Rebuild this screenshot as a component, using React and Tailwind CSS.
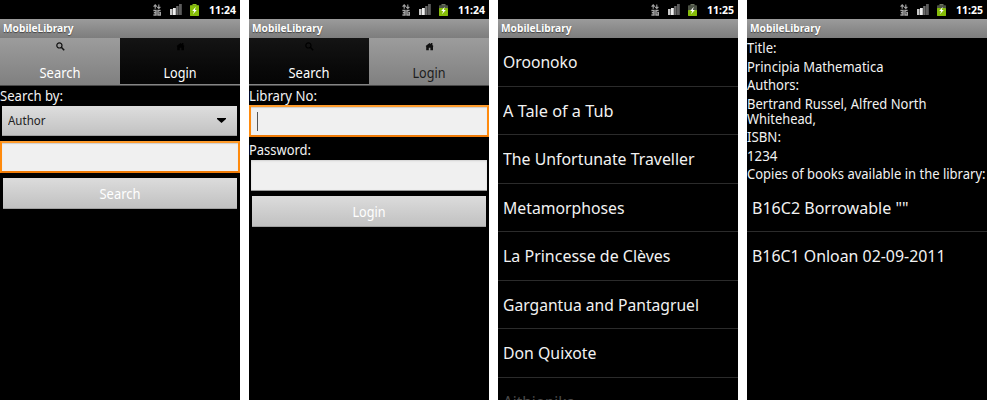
import { useLayoutEffect, useRef } from "react";

// Condenses a line of text horizontally so that it spans the given width.
function Fit({ w, className = "", children }) {
  const ref = useRef(null);
  useLayoutEffect(() => {
    const el = ref.current;
    el.style.transform = "none";
    const natural = el.getBoundingClientRect().width;
    el.style.transform = `scaleX(${w / natural})`;
  }, [w, children]);
  return (
    <span className={`block shrink-0 ${className}`} style={{ width: w }}>
      <span ref={ref} className="inline-block origin-left align-top whitespace-nowrap">
        {children}
      </span>
    </span>
  );
}

function NetworkIcon() {
  return (
    <svg width="8" height="12" viewBox="0 0 8 12" fill="none" stroke="#a4a4a4">
      <path d="M2.2 4.8V1M.6 2.6 2.2.8l1.6 1.8" strokeWidth="1.1" />
      <path d="M5.8.5v3.8M4.2 2.8l1.6 1.7 1.6-1.7" strokeWidth="1.1" />
      <path d="M.4 6.5H3v4.4H.4M.8 8.7h2.2M7.6 6.5H5v4.4h2.4V8.8H6.2" strokeWidth="1.5" />
    </svg>
  );
}

function SignalIcon() {
  return (
    <svg width="12" height="11" viewBox="0 0 12 11">
      <rect x="0" y="5" width="2.6" height="6" fill="#c8c8c8" />
      <rect x="3" y="4" width="2.8" height="7" fill="#eeeeee" />
      <rect x="6.2" y="2" width="2.4" height="9" fill="#6c6c6c" />
      <rect x="9" y="0" width="2.8" height="11" fill="#5c5c5c" />
    </svg>
  );
}

function BatteryIcon({ level }) {
  const top = level === "full" ? 1.2 : level === "high" ? 4 : 6;
  return (
    <svg width="9" height="12" viewBox="0 0 9 12">
      <rect x="2.5" y="0" width="4" height="2" fill={level === "full" ? "#8fc31a" : "#6d7560"} />
      <rect x="0" y="1.2" width="9" height="10.8" rx=".7" fill="#4c5345" />
      <rect x="0" y={top} width="9" height={12 - top} rx=".7" fill="#86bd08" />
      <path d="M5.8 2.8 2.2 7h2L3 10.2 6.8 6h-2z" fill="#fff" />
    </svg>
  );
}

function Phone({ time, level, children }) {
  return (
    <section className="flex h-[400px] w-[240px] shrink-0 flex-col overflow-hidden bg-black text-[14px] text-[#f2f2f2]">
      <div className="flex h-[19px] shrink-0 items-center pl-[153px]">
        <NetworkIcon />
        <span className="ml-[9px]"><SignalIcon /></span>
        <span className="ml-[8px]"><BatteryIcon level={level} /></span>
        <Fit w={27} className="ml-[10px] text-[11px] leading-[19px] font-bold text-white">{time}</Fit>
      </div>
      <div className="h-[19px] shrink-0 bg-linear-to-b from-[#9b9b9b] to-[#7d7d7d] pl-[3px]">
        <Fit w={70.5} className="text-[11px] leading-[18px] font-bold text-white [text-shadow:0_1px_1px_#444]">MobileLibrary</Fit>
      </div>
      {children}
    </section>
  );
}

function SearchIcon() {
  return (
    <svg width="9" height="9" viewBox="0 0 9 9" fill="none" stroke="currentColor">
      <circle cx="3.4" cy="3.4" r="2.6" strokeWidth="1.2" />
      <path d="m5.3 5.3 2.9 2.9" strokeWidth="1.6" />
    </svg>
  );
}

function HomeIcon() {
  return (
    <svg width="9" height="9" viewBox="0 0 9 9" fill="currentColor">
      <path fillRule="evenodd" d="M4.5 1 6 2V1h1.4v2L8.4 4 8 4.8V8.2H5.4V5.7H3.8v2.5H1.2V4.8L.7 4z" />
    </svg>
  );
}

function Tab({ active, label, w, icon, text }) {
  const look = active
    ? "h-[47px] bg-linear-to-b from-[#9c9c9c] to-[#808080]"
    : "h-[46px] bg-linear-to-b from-[#141414] to-[#050505]";
  return (
    <div className={`flex w-[120px] flex-col items-center pt-[4px] ${look}`}>
      <span className={`h-[9px] ${active ? "text-[#111]" : "text-black"}`}>{icon}</span>
      <Fit w={w} className={`mt-[13px] -translate-x-[0.5px] text-[14px] leading-[18px] ${text}`}>{label}</Fit>
    </div>
  );
}

function Tabs({ selected }) {
  const search = selected === "search";
  return (
    <div className="flex h-[48px] shrink-0 border-b border-[#484848] bg-[#858585]">
      <Tab active={search} label="Search" w={41} icon={<SearchIcon />} text="text-white" />
      <Tab active={!search} label="Login" w={33} icon={<HomeIcon />} text={search ? "text-white" : "text-[#1c1c1c]"} />
    </div>
  );
}

function Field({ focused, children }) {
  return focused ? (
    <div className="flex h-[32px] shrink-0 items-center border-2 border-[#ff8a0c] border-t-[#ff9c2c] border-b-[#f07c08] bg-[#f0f0f0] pl-[6px] shadow-[inset_0_1px_1px_#cfcfcf]">
      {children}
    </div>
  ) : (
    <div className="mx-[2px] h-[31px] shrink-0 border-b border-[#9a9a9a] bg-[#f0f0f0] shadow-[inset_0_1px_2px_#d0d0d0]" />
  );
}

function Button({ label, w }) {
  return (
    <div className="mx-[3px] flex h-[31px] shrink-0 justify-center border-b border-[#a0a0a0] bg-linear-to-b from-[#dcdcdc] to-[#c1c1c1]">
      <Fit w={w} className="-translate-x-[0.5px] text-[14px] leading-[31px] text-white">{label}</Fit>
    </div>
  );
}

function ListRow({ label, w, last }) {
  return (
    <div className={`h-[48.5px] shrink-0 pl-[5px] ${last ? "" : "border-b border-[#2b2b2b]"}`}>
      <Fit w={w} className="text-[17px] leading-[48px]">{label}</Fit>
    </div>
  );
}

const books = [
  ["Oroonoko", 74.5],
  ["A Tale of a Tub", 110.5],
  ["The Unfortunate Traveller", 191.5],
  ["Metamorphoses", 121.5],
  ["La Princesse de Clèves", 167.5],
  ["Gargantua and Pantagruel", 196],
  ["Don Quixote", 93.5],
];

const details = [
  ["Title:", 29.5],
  ["Principia Mathematica", 136.5],
  ["Authors:", 52],
];

export default function App() {
  return (
    <main className="flex h-[400px] w-[987px] gap-[9px] overflow-hidden bg-white font-['Noto_Sans',sans-serif]">
      <Phone time="11:24" level="full">
        <Tabs selected="search" />
        <Fit w={63} className="h-[20px] leading-[19px]">Search by:</Fit>
        <div className="mr-[3px] ml-[2px] flex h-[30px] shrink-0 items-center justify-between border-b border-[#a0a0a0] bg-linear-to-b from-[#dedede] to-[#c2c2c2] pr-[11px] pl-[6px]">
          <Fit w={37.5} className="text-[12px] leading-[30px] text-[#222]">Author</Fit>
          <svg width="9" height="5" viewBox="0 0 9 5"><path d="M0 0h9v1L4.5 5 0 1z" fill="#000" /></svg>
        </div>
        <div className="h-[5px] shrink-0" />
        <Field focused />
        <div className="h-[5px] shrink-0" />
        <Button label="Search" w={41} />
      </Phone>

      <Phone time="11:24" level="high">
        <Tabs selected="login" />
        <Fit w={68} className="h-[19px] leading-[19px]">Library No:</Fit>
        <Field focused><span className="h-[19px] w-px bg-[#555]" /></Field>
        <div className="h-[3px] shrink-0" />
        <Fit w={62} className="h-[20px] leading-[20px]">Password:</Fit>
        <Field />
        <div className="h-[5px] shrink-0" />
        <Button label="Login" w={33} />
      </Phone>

      <Phone time="11:25" level="low">
        {books.map(([label, w]) => <ListRow key={label} label={label} w={w} />)}
        <div className="pl-[5px] text-[#4a4a4a]">
          <Fit w={72} className="text-[17px] leading-[48px]">Aithiopika</Fit>
        </div>
      </Phone>

      <Phone time="11:25" level="high">
        {details.map(([label, w]) => (
          <Fit key={label} w={w} className="h-[18.6px] leading-[19.4px]">{label}</Fit>
        ))}
        <Fit w={179.5} className="h-[17px] leading-[19.4px]">Bertrand Russel, Alfred North</Fit>
        <Fit w={69} className="h-[17px] leading-[16px]">Whitehead,</Fit>
        <Fit w={34} className="h-[18.6px] leading-[18.6px]">ISBN:</Fit>
        <Fit w={30.5} className="h-[18.6px] leading-[19.4px]">1234</Fit>
        <Fit w={238.5} className="h-[18.6px] leading-[18.6px]">Copies of books available in the library:</Fit>
        <ListRow label={'B16C2 Borrowable ""'} w={156.5} />
        <ListRow label="B16C1 Onloan 02-09-2011" w={193.5} last />
      </Phone>
    </main>
  );
}
